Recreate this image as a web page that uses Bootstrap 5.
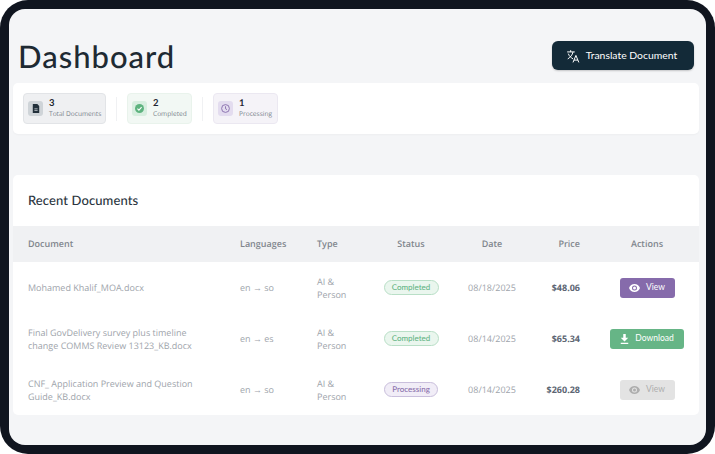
<!DOCTYPE html>
<html lang="en"><head><meta charset="utf-8"><title>Dashboard</title>
<link href="https://cdn.jsdelivr.net/npm/bootstrap@5.3.0/dist/css/bootstrap.min.css" rel="stylesheet">
<style>
html,body{height:100%;margin:0;background:#fff;overflow:hidden}
body{font-family:"Open Sans","Noto Sans",sans-serif;color:#1d2731;text-rendering:geometricPrecision}
.frame{height:454px;width:715px;background:#10151f;border-radius:28px;padding:9px;overflow:hidden}
.screen{height:100%;background:#f4f5f7;border-radius:16px;overflow:hidden;padding:0 7px 0 4px}
.top{padding:32px 5px 0 5px;height:74px}
.title{font-family:Lato,"Noto Sans",sans-serif;font-size:31px;font-weight:500;line-height:1;letter-spacing:1px;margin:0;color:#1e2a33}
.tbtn{background:#132a38;color:#fff;border:0;border-radius:6px;height:29px;width:142px;font-family:Lato,sans-serif;font-size:10.4px;padding:0 3px 0 0;gap:6px;box-shadow:0 1px 2px rgba(0,0,0,.2)}
.statcard{background:#fff;border-radius:5px;height:51px;padding:10px;box-shadow:0 1px 2px rgba(0,0,0,.03)}
.stat{height:31px;border-radius:4px;padding:0 4px;border:1px solid;gap:6px}
.s1{width:83px;background:#eff0f2;border-color:#e2e4e7}
.s2{width:65px;background:#f2f8f4;border-color:#e9f3ec}
.s3{width:65px;background:#f5f3f8;border-color:#ebe8f1}
.sico{width:15px;height:15px;border-radius:3px;flex-shrink:0}
.s1 .sico{background:#cfd4d8}.s2 .sico{background:#d8eee0}.s3 .sico{background:#e3dcef}
.num{font-size:9.5px;font-weight:700;line-height:11px;color:#1d2731;font-family:Lato,sans-serif}
.lbl{font-size:6.6px;line-height:10px;color:#7a838c;white-space:nowrap}
.sep{width:1px;height:24px;background:#f0f1f3;margin:0 10px}
.recent{background:#fff;border-radius:5px;margin-top:41px;overflow:hidden}
.rhead{height:51px;padding:0 15px;font-family:Lato,sans-serif;font-size:13px;font-weight:500;color:#2b3540;display:flex;align-items:center;letter-spacing:.1px}
.tbl{table-layout:fixed;width:100%;margin:0;font-size:9px;--bs-table-bg:transparent}
.tbl th{background:#f0f1f3;color:#80868d;font-weight:600;height:36px;padding:0 15px;border:0;vertical-align:middle}
.tbl td{height:51px;padding:0 15px;border:0;color:#9ea4ab;vertical-align:middle;line-height:13px}
.c1{width:212px}.c2{width:77px}.c3{width:67px}.c4{width:84px}.c5{width:78px}.c6{width:64px}.c7{width:104px}
.tbl .pad0{padding:0}
.tbl td.price{color:#5d6673;font-weight:700;padding:0 15px 0 0}
.tbl th.pr{padding:0 15px 0 0}
.pill{display:inline-block;font-family:Lato,sans-serif;font-size:8px;line-height:13px;padding:0 7px;border-radius:8px;border:1px solid;font-weight:500}
.pg{background:#eaf6ee;border-color:#b9dfc7;color:#66b586;width:55px}
.pp{background:#f1edf7;border-color:#c9bfdc;color:#8a70ac;width:54px}
.act{display:inline-flex;align-items:center;justify-content:center;gap:6px;height:20px;border-radius:3px;color:#fff;font-family:Lato,sans-serif;font-size:8.5px;border:0;padding:0}
.av{width:55px;background:#866bab}
.ad{width:74px;background:#66b586}
.ax{width:55px;background:#e3e3e3;color:#aeaeae}
</style></head>
<body>
<div class="frame"><div class="screen">
  <div class="top d-flex justify-content-between align-items-start">
    <h1 class="title">Dashboard</h1>
    <button class="tbtn d-flex align-items-center justify-content-center" type="button">
      <svg width="14" height="14" viewBox="0 0 24 24" fill="none" stroke="#fff" stroke-width="1.7"><path d="M2 5h13M8 2v3M12 5c-1 5-4 9-9 12M4 8c1 4 5 7 8 9"/><path d="M12 23l5-12 5 12M13.6 19h6.8"/></svg>
      <span>Translate Document</span>
    </button>
  </div>
  <div class="statcard d-flex align-items-center">
    <div class="stat s1 d-flex align-items-center">
      <div class="sico d-flex align-items-center justify-content-center"><svg width="8" height="9" viewBox="0 0 12 14"><path fill="#22303b" d="M1 0h7l3 3v11H1z"/><path stroke="#cfd4d8" stroke-width="1.2" d="M3.5 7.5h5M3.5 10h5"/></svg></div>
      <div><div class="num">3</div><div class="lbl">Total Documents</div></div>
    </div>
    <div class="sep"></div>
    <div class="stat s2 d-flex align-items-center">
      <div class="sico d-flex align-items-center justify-content-center"><svg width="9" height="9" viewBox="0 0 12 12"><circle cx="6" cy="6" r="6" fill="#5eb37f"/><path d="M3.2 6.2l2 2 3.6-4" stroke="#fff" stroke-width="1.4" fill="none"/></svg></div>
      <div><div class="num">2</div><div class="lbl">Completed</div></div>
    </div>
    <div class="sep"></div>
    <div class="stat s3 d-flex align-items-center">
      <div class="sico d-flex align-items-center justify-content-center"><svg width="9" height="9" viewBox="0 0 12 12" fill="none" stroke="#866bab" stroke-width="1.2"><circle cx="6" cy="6" r="5.2"/><path d="M6 3v3.3l2 1.2"/></svg></div>
      <div><div class="num">1</div><div class="lbl">Processing</div></div>
    </div>
  </div>
  <div class="recent">
    <div class="rhead">Recent Documents</div>
    <table class="table tbl">
      <colgroup><col class="c1"><col class="c2"><col class="c3"><col class="c4"><col class="c5"><col class="c6"><col class="c7"></colgroup>
      <thead><tr><th>Document</th><th>Languages</th><th>Type</th><th class="text-center">Status</th><th class="text-center">Date</th><th class="text-end pr">Price</th><th class="text-center">Actions</th></tr></thead>
      <tbody>
        <tr><td>Mohamed Khalif_MOA.docx</td><td>en → so</td><td>AI &amp; Person</td><td class="text-center pad0"><span class="pill pg">Completed</span></td><td class="text-center pad0">08/18/2025</td><td class="text-end price">$48.06</td><td class="text-center pad0"><button class="act av" type="button"><svg width="11" height="8" viewBox="0 0 22 16"><path fill="#fff" d="M11 0C6 0 2 3 0 8c2 5 6 8 11 8s9-3 11-8c-2-5-6-8-11-8zm0 13a5 5 0 110-10 5 5 0 010 10zm0-8a3 3 0 100 6 3 3 0 000-6z"/></svg>View</button></td></tr>
        <tr><td>Final GovDelivery survey plus timeline change COMMS Review 13123_KB.docx</td><td>en → es</td><td>AI &amp; Person</td><td class="text-center pad0"><span class="pill pg">Completed</span></td><td class="text-center pad0">08/14/2025</td><td class="text-end price">$65.34</td><td class="text-center pad0"><button class="act ad" type="button"><svg width="9" height="10" viewBox="0 0 14 16"><path fill="#fff" d="M5 0h4v6h4l-6 6-6-6h4zM1 14h12v2H1z"/></svg>Download</button></td></tr>
        <tr><td>CNF_ Application Preview and Question Guide_KB.docx</td><td>en → so</td><td>AI &amp; Person</td><td class="text-center pad0"><span class="pill pp">Processing</span></td><td class="text-center pad0">08/14/2025</td><td class="text-end price">$260.28</td><td class="text-center pad0"><button class="act ax" type="button"><svg width="11" height="8" viewBox="0 0 22 16"><path fill="#aeaeae" d="M11 0C6 0 2 3 0 8c2 5 6 8 11 8s9-3 11-8c-2-5-6-8-11-8zm0 13a5 5 0 110-10 5 5 0 010 10zm0-8a3 3 0 100 6 3 3 0 000-6z"/></svg>View</button></td></tr>
      </tbody>
    </table>
  </div>
</div></div>
<script src="https://cdn.jsdelivr.net/npm/bootstrap@5.3.0/dist/js/bootstrap.bundle.min.js"></script>
</body></html>
